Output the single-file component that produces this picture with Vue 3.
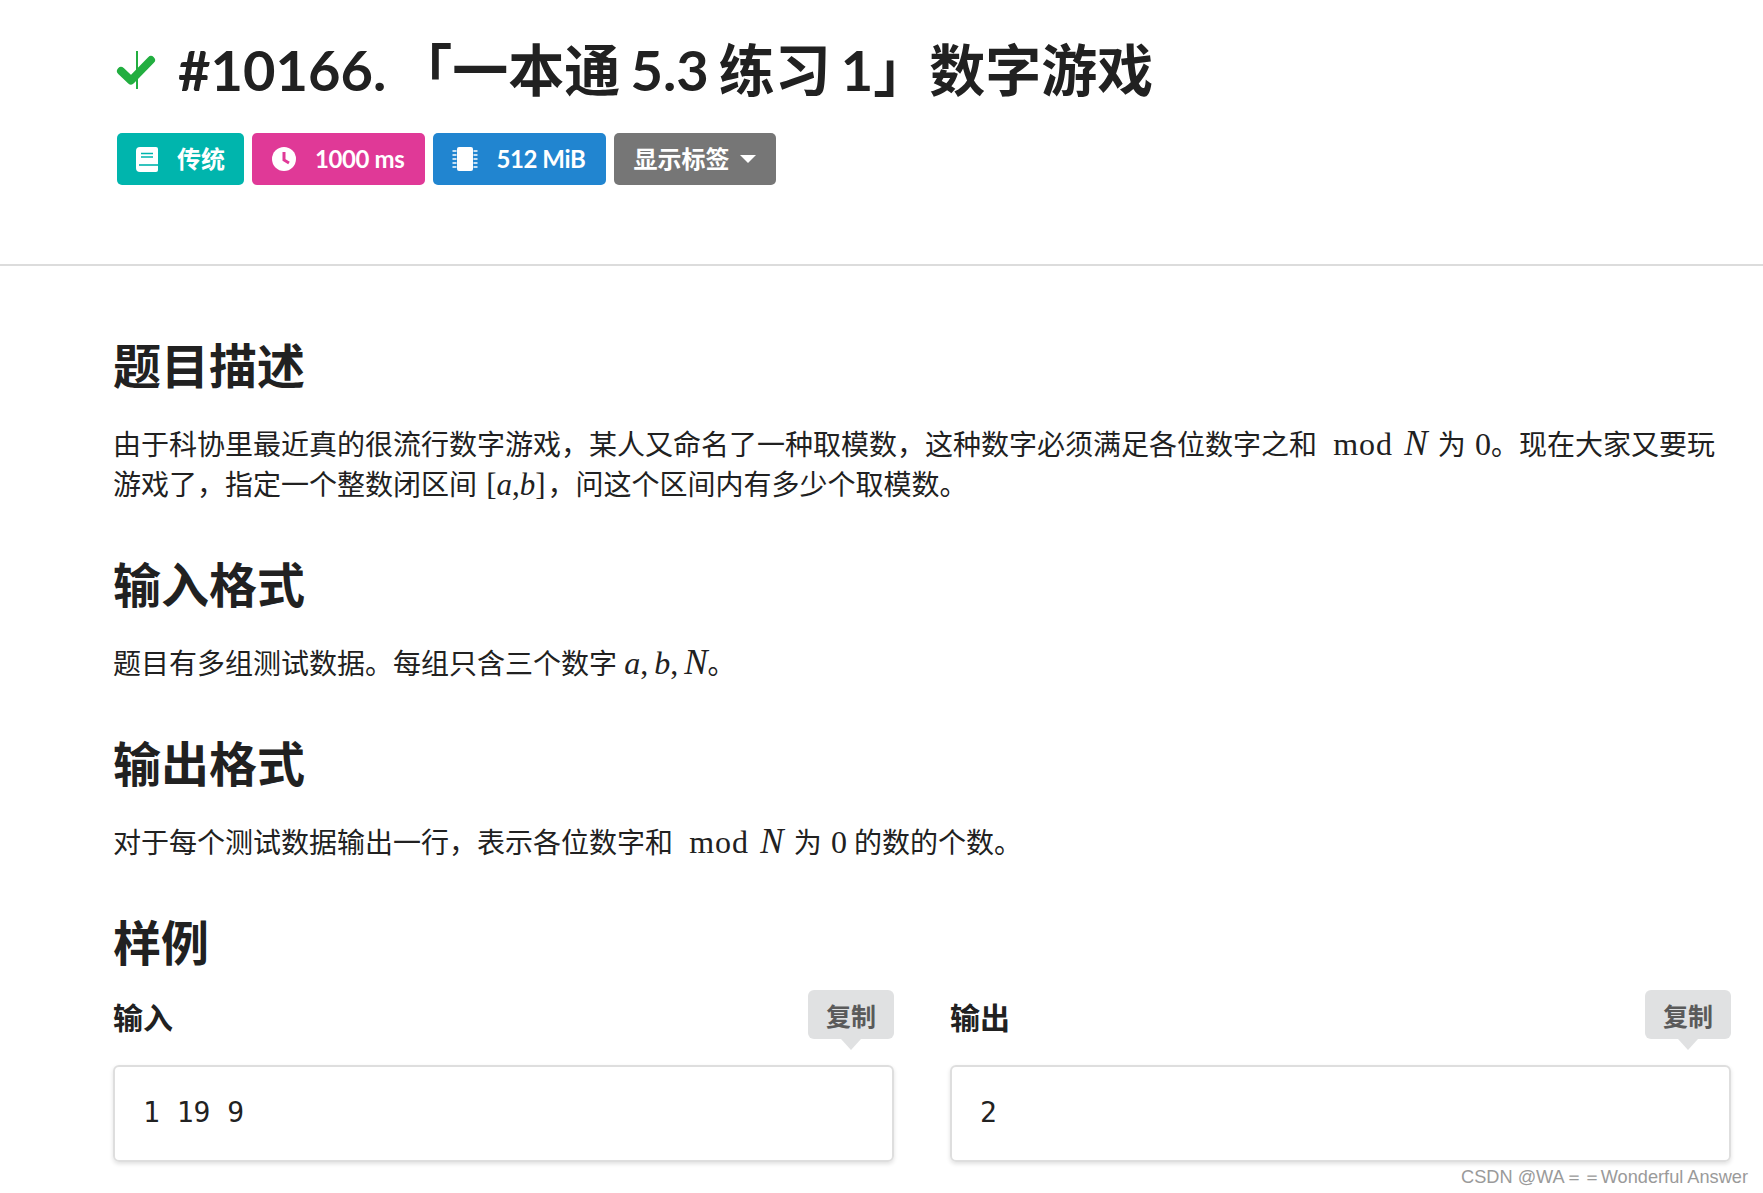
<template>
  <div class="page">
    <header class="top">
      <h1 class="title">
        <svg class="check" viewBox="0 0 40 38" width="40" height="38">
          <path d="M5 20 L15 29.5 L35 9" fill="none" stroke="#22ae40" stroke-width="8" stroke-linecap="round" stroke-linejoin="round" />
          <rect x="20" y="0" width="2" height="38" fill="#22ae40" />
        </svg>
        <span>#10166. 「一本通 5.3 练习 1」数字游戏</span>
      </h1>
      <div class="labels">
        <div class="label teal">
          <svg class="ico" viewBox="0 0 22 25" width="22" height="25">
            <path d="M4 0h16a2 2 0 0 1 2 2v21a2 2 0 0 1-2 2H4a4 4 0 0 1-4-4V4a4 4 0 0 1 4-4z" fill="#fff" />
            <path d="M5 6.5h12M5 10h12" stroke="#00b5ad" stroke-width="1.3" />
            <path d="M3 18h19" stroke="#00b5ad" stroke-width="1.6" />
          </svg>
          <span>传统</span>
        </div>
        <div class="label pink">
          <svg class="ico" viewBox="0 0 26 26" width="26" height="26">
            <circle cx="13" cy="13" r="12" fill="#fff" />
            <path d="M13 6v8l5 3" fill="none" stroke="#e03997" stroke-width="3" />
          </svg>
          <span class="tight">1000 ms</span>
        </div>
        <div class="label blue">
          <svg class="ico" viewBox="0 0 26 26" width="26" height="26">
            <rect x="5" y="1" width="16" height="24" rx="2" fill="#fff" />
            <path d="M0.5 5h4M0.5 9h4M0.5 13h4M0.5 17h4M0.5 21h4M21.5 5h4M21.5 9h4M21.5 13h4M21.5 17h4M21.5 21h4" stroke="#fff" stroke-width="1.6" />
          </svg>
          <span class="tight">512 MiB</span>
        </div>
        <div class="label gray">
          <span>显示标签</span>
          <i class="caret"></i>
        </div>
      </div>
    </header>

    <main class="content">
      <section>
        <h2>题目描述</h2>
        <p>由于科协里最近真的很流行数字游戏，某人又命名了一种取模数，这种数字必须满足各位数字之和 <span class="math mod">mod</span> <i class="math big var">N</i> 为 <span class="math zero">0</span>。现在大家又要玩游戏了，指定一个整数闭区间 <span class="math range">[<i>a</i>,<i>b</i>]</span>，问这个区间内有多少个取模数。</p>
      </section>
      <section>
        <h2>输入格式</h2>
        <p>题目有多组测试数据。每组只含三个数字 <span class="math"><i>a</i>,<i class="thin">b</i>,<i class="thin big">N</i></span>。</p>
      </section>
      <section>
        <h2>输出格式</h2>
        <p>对于每个测试数据输出一行，表示各位数字和 <span class="math mod">mod</span> <i class="math big var">N</i> 为 <span class="math zero">0</span> 的数的个数。</p>
      </section>
      <section>
        <h2>样例</h2>
        <div class="samples">
          <div v-for="s in samples" :key="s.name" class="sample">
            <div class="sample-head">
              <strong>{{ s.name }}</strong>
              <button class="copy">复制</button>
            </div>
            <pre class="code">{{ s.text }}</pre>
          </div>
        </div>
      </section>
    </main>
    <div class="mark">CSDN @WA＝＝Wonderful Answer</div>
  </div>
</template>

<script setup>
const samples = [
  { name: '输入', text: '1 19 9' },
  { name: '输出', text: '2' }
]
</script>

<style>
html, body { margin: 0; background: #fff; }
</style>

<style scoped>
.page {
  position: relative;
  width: 1763px;
  height: 1193px;
  overflow: hidden;
  color: #212121;
  font-family: Lato, "Noto Sans CJK SC", sans-serif;
}

.top {
  border-bottom: 2px solid #dcdcdc;
  padding: 35px 0 0 116px;
  height: 229px;
}

.title {
  display: flex;
  align-items: center;
  gap: 22px;
  margin: 0;
  height: 70px;
  font-size: 56px;
  line-height: 70px;
  font-weight: 700;
  word-spacing: -3.5px;
}

.labels {
  display: flex;
  gap: 8px;
  margin-top: 28px;
  margin-left: 1px;
}

.label {
  display: flex;
  align-items: center;
  gap: 18px;
  height: 52px;
  padding: 0 19px;
  border-radius: 5px;
  color: #fff;
  font-size: 24px;
  line-height: 50px;
  font-weight: 700;
}

.tight { letter-spacing: -0.4px; margin-right: 2px; }

.teal { background: #00b5ad; gap: 19px; }
.pink { background: #e03997; }
.blue { background: #2185d0; }
.gray { background: #767676; gap: 11px; padding-right: 20px; }

.caret {
  width: 0;
  height: 0;
  border-left: 8px solid transparent;
  border-right: 8px solid transparent;
  border-top: 8px solid #fff;
}

.content {
  padding: 0 32px 0 113px;
}

h2 {
  margin: 0;
  height: 66px;
  font-size: 48px;
  line-height: 66px;
  font-weight: 700;
}

section:first-child { padding-top: 67px; }

section + section { margin-top: 48px; }

p {
  margin: 25px 0 0;
  font-size: 28px;
  line-height: 40px;
}

.math {
  font-family: "Liberation Serif", serif;
  font-size: 32px;
  line-height: 1;
}

.thin { margin-left: 6px; }

.big { font-size: 35px; }

.var { margin: 0 3px 0 4px; }

.mod { margin-left: 9px; letter-spacing: 1px; }

.zero { margin-left: 2px; }

.range { font-size: 31px; margin: 0 2px; }

.samples {
  display: grid;
  grid-template-columns: 781px 781px;
  gap: 56px;
  margin-top: 14px;
}

.sample-head {
  display: flex;
  justify-content: space-between;
  align-items: flex-start;
  height: 75px;
}

.sample-head strong {
  font-size: 30px;
  line-height: 54px;
}

.copy {
  position: relative;
  width: 86px;
  height: 49px;
  padding: 0;
  border: 0;
  border-radius: 6px;
  background: #e0e1e2;
  color: #5a5a5a;
  font-family: inherit;
  font-size: 25px;
  font-weight: 700;
}

.copy::after {
  content: "";
  position: absolute;
  left: 33px;
  top: 49px;
  border-left: 10px solid transparent;
  border-right: 10px solid transparent;
  border-top: 11px solid #e0e1e2;
}

.code {
  margin: 0;
  height: 97px;
  box-sizing: border-box;
  padding: 27px 28px;
  border: 2px solid #dedede;
  border-radius: 6px;
  box-shadow: 0 2px 4px rgba(0, 0, 0, 0.12);
  font-family: "DejaVu Sans Mono", monospace;
  font-size: 28px;
  line-height: 38px;
  color: #222;
}

.mark {
  position: absolute;
  right: 15px;
  bottom: 4px;
  font-family: "Liberation Sans", sans-serif;
  font-size: 18.2px;
  line-height: 24px;
  color: #9a9a9a;
}
</style>
